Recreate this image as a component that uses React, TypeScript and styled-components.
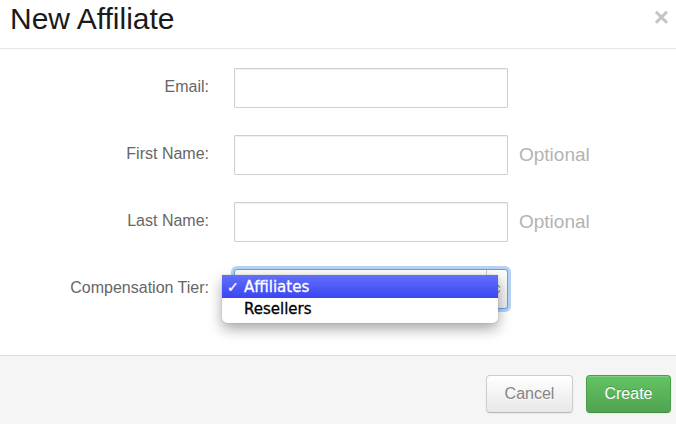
import React from 'react';
import styled, { createGlobalStyle } from 'styled-components';

const GlobalStyle = createGlobalStyle`
  html, body {
    margin: 0;
    padding: 0;
    background: #fff;
  }
  * {
    box-sizing: border-box;
  }
`;

const Modal = styled.div`
  width: 676px;
  height: 424px;
  display: flex;
  flex-direction: column;
  font-family: 'Liberation Sans', Arial, sans-serif;
  overflow: hidden;
`;

const Header = styled.div`
  height: 49px;
  padding: 1px 7px 0 10px;
  border-bottom: 1px solid #e5e5e5;
  display: flex;
  align-items: flex-start;
  justify-content: space-between;
`;

const Title = styled.h3`
  margin: 0;
  font-size: 30px;
  line-height: 36px;
  font-weight: normal;
  color: #1a1a1a;
`;

const Close = styled.button`
  border: none;
  background: transparent;
  padding: 0;
  margin-top: 4px;
  font-family: 'Liberation Sans', Arial, sans-serif;
  font-size: 26px;
  line-height: 24px;
  font-weight: bold;
  color: #c4c4c4;
  cursor: pointer;
`;

const Body = styled.div`
  flex: 1;
  padding-top: 19px;
`;

const FormGrid = styled.div`
  display: grid;
  grid-template-columns: 209px 274px auto;
  column-gap: 25px;
  row-gap: 27px;
  grid-auto-rows: 40px;
  align-items: center;
`;

const Label = styled.label`
  text-align: right;
  font-size: 16px;
  color: #666;
  padding-bottom: 2px;
`;

const Field = styled.div`
  position: relative;
  height: 40px;
  display: flex;
  align-items: center;
  gap: 11px;
  grid-column: 2 / span 2;
`;

const Input = styled.input`
  width: 274px;
  height: 40px;
  border: 1px solid #cfcfcf;
  border-radius: 1px;
  box-shadow: inset 0 1px 1px rgba(0, 0, 0, 0.06);
  background: #fff;
  font-size: 16px;
  padding: 0 8px;
  outline: none;
`;

const Hint = styled.span`
  font-size: 19px;
  color: #b3b3b3;
  padding-bottom: 1px;
`;

const SelectBox = styled.div`
  width: 274px;
  height: 40px;
  border: 1px solid rgba(82, 150, 230, 0.9);
  border-radius: 3px;
  box-shadow: 0 0 0 3px rgba(120, 175, 235, 0.55);
  background: linear-gradient(#fdfdfd, #ececec);
  display: flex;
  justify-content: flex-end;
`;

const SelectArrows = styled.div`
  width: 21px;
  border-left: 1px solid #c8c8c8;
  display: flex;
  align-items: center;
  justify-content: center;
`;

const Popup = styled.ul`
  position: absolute;
  left: -12px;
  top: 6px;
  width: 276px;
  margin: 0;
  padding: 0 0 4px;
  list-style: none;
  background: #fff;
  border-radius: 0 0 5px 5px;
  box-shadow: 0 6px 14px rgba(0, 0, 0, 0.35), 0 0 1px rgba(0, 0, 0, 0.4);
  font-family: 'DejaVu Sans', 'Lucida Grande', sans-serif;
  font-size: 15px;
  z-index: 2;
`;

const Option = styled.li<{ $active?: boolean }>`
  height: ${(p) => (p.$active ? 23 : 21)}px;
  display: flex;
  align-items: center;
  padding-left: 5px;
  color: ${(p) => (p.$active ? '#fff' : '#000')};
  background: ${(p) =>
    p.$active ? 'linear-gradient(#6270fb, #3a45f2)' : 'transparent'};
  -webkit-text-stroke: 0.3px currentColor;
`;

const Check = styled.span`
  width: 17px;
  font-size: 14px;
`;

const Footer = styled.div`
  height: 69px;
  border-top: 1px solid #dcdcdc;
  background: #f5f5f5;
  display: flex;
  justify-content: flex-end;
  align-items: flex-start;
  gap: 13px;
  padding: 19px 5px 0 0;
`;

const Button = styled.button<{ $primary?: boolean }>`
  height: 38px;
  width: ${(p) => (p.$primary ? 85 : 87)}px;
  border-radius: 4px;
  font-family: 'Liberation Sans', Arial, sans-serif;
  font-size: 16px;
  cursor: pointer;
  color: ${(p) => (p.$primary ? '#fff' : '#858585')};
  border: 1px solid ${(p) => (p.$primary ? '#4a9d4a' : '#cdcdcd')};
  border-bottom-color: ${(p) => (p.$primary ? '#3f8f3f' : '#b8b8b8')};
  background: ${(p) =>
    p.$primary
      ? 'linear-gradient(#62c462, #51a351)'
      : 'linear-gradient(#ffffff, #e8e8e8)'};
  text-shadow: ${(p) =>
    p.$primary ? '0 -1px 0 rgba(0,0,0,0.2)' : '0 1px 0 rgba(255,255,255,0.7)'};
  box-shadow: inset 0 1px 0 rgba(255, 255, 255, 0.2),
    0 1px 2px rgba(0, 0, 0, 0.05);
`;

const Arrows = () => (
  <svg width="8" height="12" viewBox="0 0 8 12">
    <path d="M1 4.5 L4 1.5 L7 4.5" fill="none" stroke="#9a9a9a" strokeWidth="1.3" />
    <path d="M1 7.5 L4 10.5 L7 7.5" fill="none" stroke="#9a9a9a" strokeWidth="1.3" />
  </svg>
);

export default function App() {
  return (
    <Modal>
      <GlobalStyle />
      <Header>
        <Title>New Affiliate</Title>
        <Close aria-label="Close">×</Close>
      </Header>
      <Body>
        <FormGrid>
          <Label>Email:</Label>
          <Field>
            <Input type="email" />
          </Field>

          <Label>First Name:</Label>
          <Field>
            <Input />
            <Hint>Optional</Hint>
          </Field>

          <Label>Last Name:</Label>
          <Field>
            <Input />
            <Hint>Optional</Hint>
          </Field>

          <Label>Compensation Tier:</Label>
          <Field>
            <SelectBox>
              <SelectArrows>
                <Arrows />
              </SelectArrows>
            </SelectBox>
            <Popup>
              <Option $active>
                <Check>✓</Check>Affiliates
              </Option>
              <Option>
                <Check />Resellers
              </Option>
            </Popup>
          </Field>
        </FormGrid>
      </Body>
      <Footer>
        <Button>Cancel</Button>
        <Button $primary>Create</Button>
      </Footer>
    </Modal>
  );
}
